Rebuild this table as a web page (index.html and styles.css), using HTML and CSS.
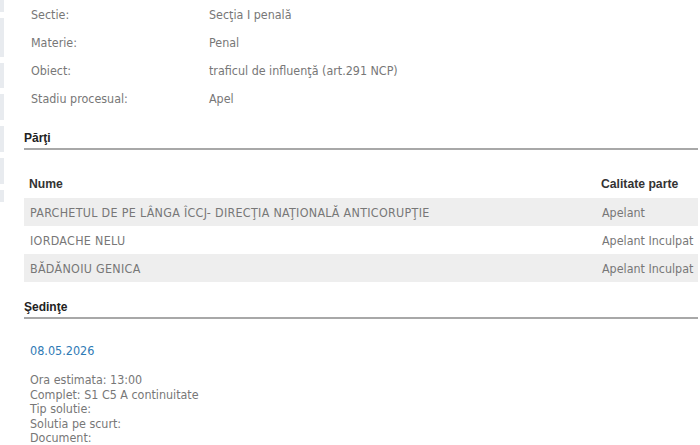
FILE: index.html
```html
<!DOCTYPE html>
<html lang="ro">
<head>
<meta charset="utf-8">
<link rel="stylesheet" href="styles.css">
</head>
<body>
<div class="page">
  <div class="strip">
    <span class="blk b1"></span>
    <span class="blk b2"></span>
    <span class="blk b3"></span>
    <span class="blk b4"></span>
    <span class="blk b5"></span>
    <span class="blk b6"></span>
    <span class="blk b7"></span>
  </div>
  <div class="main">
    <div class="info">
      <div class="row"><span class="lbl">Sectie:</span><span class="val">Secţia I penală</span></div>
      <div class="row"><span class="lbl">Materie:</span><span class="val">Penal</span></div>
      <div class="row"><span class="lbl">Obiect:</span><span class="val">traficul de influenţă (art.291 NCP)</span></div>
      <div class="row"><span class="lbl">Stadiu procesual:</span><span class="val">Apel</span></div>
    </div>

    <h2 class="sect">Părţi</h2>
    <div class="parti">
      <div class="thead"><span class="c1">Nume</span><span class="c2">Calitate parte</span></div>
      <div class="tr alt"><span class="c1">PARCHETUL DE PE LÂNGA ÎCCJ- DIRECŢIA NAŢIONALĂ ANTICORUPŢIE</span><span class="c2">Apelant</span></div>
      <div class="tr"><span class="c1">IORDACHE NELU</span><span class="c2">Apelant Inculpat</span></div>
      <div class="tr alt"><span class="c1">BĂDĂNOIU GENICA</span><span class="c2">Apelant Inculpat</span></div>
    </div>

    <h2 class="sect sect2">Şedinţe</h2>
    <div class="sedinta">
      <div class="date">08.05.2026</div>
      <div class="details">
        <div>Ora estimata: 13:00</div>
        <div>Complet: S1 C5 A continuitate</div>
        <div>Tip solutie:</div>
        <div>Solutia pe scurt:</div>
        <div>Document:</div>
      </div>
    </div>
  </div>
</div>
</body>
</html>
```
FILE: styles.css
```css
html, body {
  margin: 0;
  padding: 0;
  background: #ffffff;
}
.page {
  display: flex;
  width: 700px;
  height: 445px;
  overflow: hidden;
}
.strip {
  width: 4px;
  display: flex;
  flex-direction: column;
  gap: 6px;
  flex: none;
}
.blk {
  display: block;
  background: #e8ebef;
}
.b1 { height: 12px; }
.b2 { height: 39px; }
.b3 { height: 25px; }
.b4 { height: 26px; }
.b5 { height: 26px; }
.b6 { height: 26px; }
.b7 { height: 12px; }

.main {
  flex: 1;
  padding-left: 20px;
  padding-right: 2px;
  font-family: "DejaVu Sans Condensed", "DejaVu Sans", sans-serif;
  font-size: 12.4px;
  color: #777777;
}
.info .row {
  display: grid;
  grid-template-columns: 178px 1fr;
  height: 28px;
  align-items: center;
  padding-left: 7px;
}
.sect {
  margin: 19px 0 0 0;
  font-family: "Liberation Sans", Arial, sans-serif;
  font-size: 12px;
  font-weight: bold;
  color: #222222;
  line-height: 14px;
  padding-bottom: 3px;
  border-bottom: 2px solid #a8a8a8;
}
.parti {
  margin-top: 20px;
}
.thead, .tr {
  display: grid;
  grid-template-columns: 1fr 98px;
  height: 28px;
  align-items: center;
}
.thead {
  font-family: "Liberation Sans", Arial, sans-serif;
  font-weight: bold;
  font-size: 12.2px;
  color: #333333;
}
.thead .c1 { padding-left: 5px; }
.thead .c2 { padding-left: 1px; }
.tr .c1 {
  padding-left: 6px;
  letter-spacing: 0.3px;
}
.tr .c2 { padding-left: 2px; }
.tr.alt { background: #eeeeee; }

.sect2 { margin-top: 18px; }
.sedinta {
  padding-left: 6px;
}
.date {
  color: #2f7ab5;
  font-size: 12.5px;
  margin-top: 25px;
  line-height: 14px;
}
.details {
  margin-top: 15px;
  line-height: 14.6px;
}
```
